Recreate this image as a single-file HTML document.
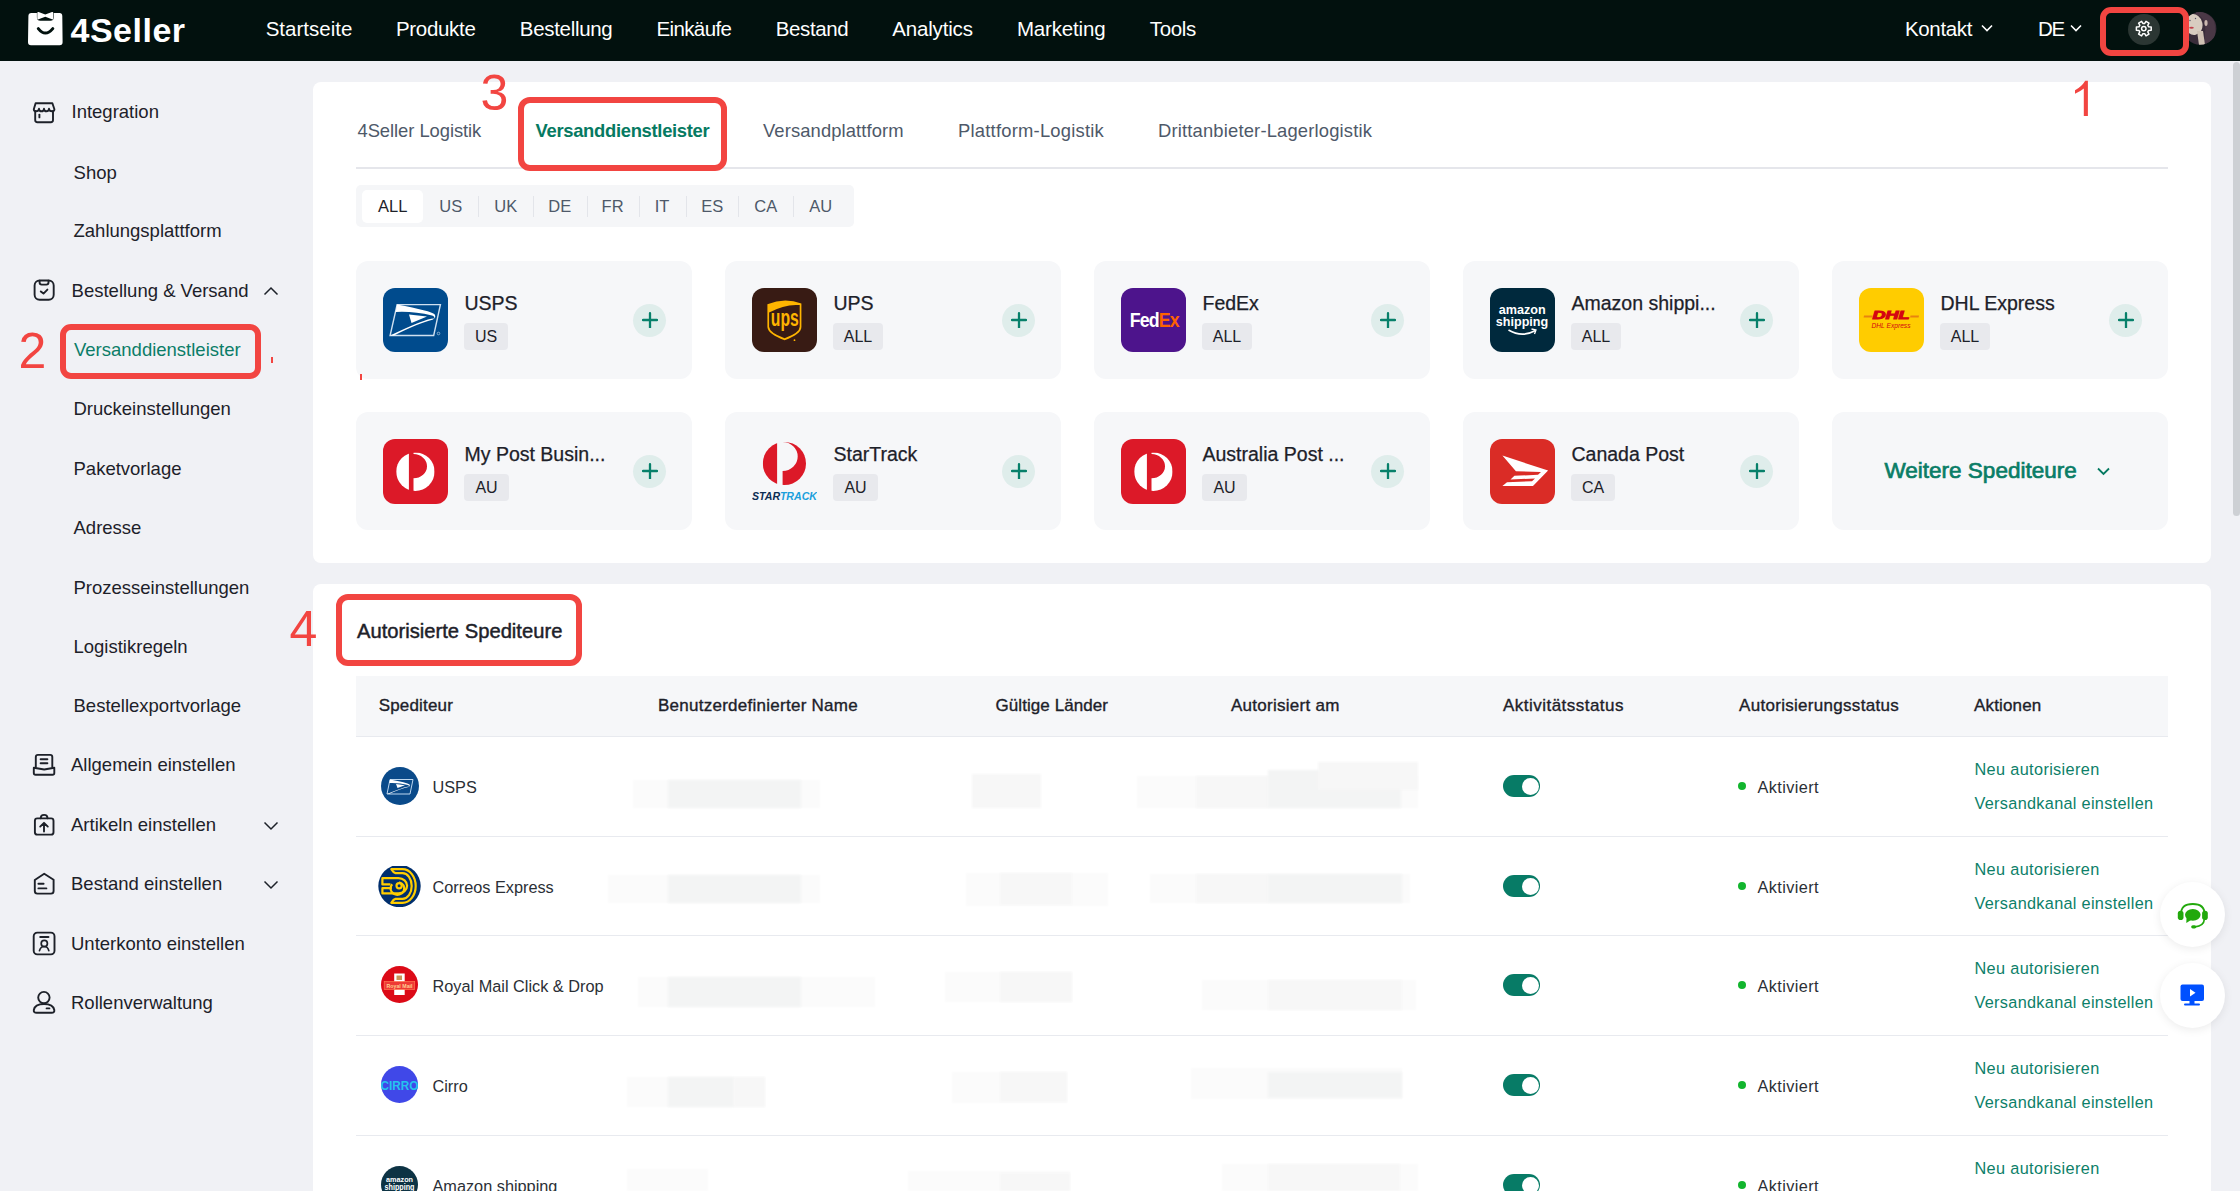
<!DOCTYPE html>
<html><head><meta charset="utf-8"><title>4Seller</title>
<style>
html,body{margin:0;padding:0;width:2240px;height:1191px;overflow:hidden;background:#f0f1f5;}
body{position:relative;font-family:'Liberation Sans', sans-serif;}
.t{position:absolute;white-space:nowrap;font-family:'Liberation Sans', sans-serif;}
.b{position:absolute;box-sizing:border-box;}
</style></head><body>
<div class="b" style="left:0px;top:0px;width:2240px;height:1191px;background:#f0f1f5;border-radius:0px;"></div>
<div class="b" style="left:0px;top:0px;width:2240px;height:61px;background:#02110e;border-radius:0px;"></div>
<svg class="b" style="left:26px;top:10px;" width="40" height="38" viewBox="0 0 40 38">
<path d="M2.4 6 Q2.4 3 5.4 3 L10.9 3 L10.9 7.2 Q10.9 10.7 14.4 10.7 L24.3 10.7 Q27.8 10.7 27.8 7.2 L27.8 3 L33.4 3 Q36.3 3 36.3 6 L36.6 32.2 Q36.6 35.2 33.6 35.2 L5 35.2 Q2 35.2 2 32.2 Z" fill="#fff"/>
<path d="M11.3 3 Q11.3 1.6 12.6 2 L19.3 4.6 L26 2 Q27.3 1.6 27.3 3 L27.3 8.4 Q27.3 9.8 26 9.3 L19.3 6.8 L12.6 9.3 Q11.3 9.8 11.3 8.4 Z" fill="#fff"/>
<path d="M12.3 18.6 Q19.3 27.5 26.8 18.6" stroke="#02110e" stroke-width="3" fill="none" stroke-linecap="round"/>
</svg>
<div class="t" style="left:70.50px;top:12.86px;font-size:34px;line-height:34px;color:#fff;font-weight:700;letter-spacing:0.5px;">4Seller</div>
<div class="t" style="left:265.70px;top:18.52px;font-size:20.5px;line-height:20.5px;color:#fff;letter-spacing:0px;">Startseite</div>
<div class="t" style="left:395.90px;top:18.52px;font-size:20.5px;line-height:20.5px;color:#fff;letter-spacing:-0.3px;">Produkte</div>
<div class="t" style="left:519.80px;top:18.52px;font-size:20.5px;line-height:20.5px;color:#fff;letter-spacing:-0.31px;">Bestellung</div>
<div class="t" style="left:656.40px;top:18.52px;font-size:20.5px;line-height:20.5px;color:#fff;letter-spacing:-0.6px;">Einkäufe</div>
<div class="t" style="left:775.80px;top:18.52px;font-size:20.5px;line-height:20.5px;color:#fff;letter-spacing:-0.38px;">Bestand</div>
<div class="t" style="left:892.30px;top:18.52px;font-size:20.5px;line-height:20.5px;color:#fff;letter-spacing:-0.18px;">Analytics</div>
<div class="t" style="left:1016.90px;top:18.52px;font-size:20.5px;line-height:20.5px;color:#fff;letter-spacing:-0.16px;">Marketing</div>
<div class="t" style="left:1149.70px;top:18.52px;font-size:20.5px;line-height:20.5px;color:#fff;letter-spacing:-0.3px;">Tools</div>
<div class="t" style="left:1905.00px;top:18.52px;font-size:20.5px;line-height:20.5px;color:#fff;letter-spacing:-0.36px;">Kontakt</div>
<div class="t" style="left:2038.00px;top:18.52px;font-size:20.5px;line-height:20.5px;color:#fff;letter-spacing:-1.2px;">DE</div>
<svg class="b" style="left:1981px;top:24px;" width="12" height="8" viewBox="0 0 12 8"><path d="M1 1.5 L6 6.5 L11 1.5" stroke="#fff" stroke-width="1.6" fill="none"/></svg>
<svg class="b" style="left:2070px;top:24px;" width="12" height="8" viewBox="0 0 12 8"><path d="M1 1.5 L6 6.5 L11 1.5" stroke="#fff" stroke-width="1.6" fill="none"/></svg>
<div class="b" style="left:2128px;top:13.5px;width:32px;height:31.5px;background:#2b3633;border-radius:16px;"></div>
<svg class="b" style="left:2133px;top:18px;" width="22" height="22" viewBox="0 0 22 22"><g transform="translate(10.8 10.6)" fill="none" stroke="#fff" stroke-width="1.5" stroke-linejoin="round">
<path d="M4.89 -1.78 L7.41 -1.71 L7.41 1.71 L4.89 1.78 L3.98 3.34 L5.18 5.56 L2.22 7.27 L0.90 5.12 L-0.90 5.12 L-2.22 7.27 L-5.18 5.56 L-3.98 3.34 L-4.89 1.78 L-7.41 1.71 L-7.41 -1.71 L-4.89 -1.78 L-3.98 -3.34 L-5.18 -5.56 L-2.22 -7.27 L-0.90 -5.12 L0.90 -5.12 L2.22 -7.27 L5.18 -5.56 L3.98 -3.34 Z"/>
<circle r="2.2"/></g></svg>
<svg class="b" style="left:2183px;top:11px;" width="34" height="34" viewBox="0 0 34 34"><defs><clipPath id="av"><circle cx="17" cy="17.4" r="16.4"/></clipPath></defs>
<g clip-path="url(#av)"><rect width="34" height="34" fill="#3a2d3a"/>
<path d="M13 0 Q26 1 31 10 Q34 20 30 34 L20 34 Q24 20 21 10 Q18 4 13 4 Z" fill="#4a3846"/>
<ellipse cx="10.5" cy="13.5" rx="9" ry="10.5" transform="rotate(-12 10.5 13.5)" fill="#d8ccc0"/>
<path d="M14 20 L20 20 L22 34 L16 34 Z" fill="#d0c2b4"/>
<ellipse cx="8.5" cy="16.8" rx="2.3" ry="1" fill="#c0404a"/>
<circle cx="12.5" cy="7.5" r="0.7" fill="#556"/><circle cx="7" cy="9.5" r="0.7" fill="#556"/>
<ellipse cx="23" cy="12" rx="1.6" ry="3" fill="#cbb8b0"/></g></svg>
<div class="b" style="left:2100px;top:7px;width:88.6px;height:48.5px;border:6.5px solid #f24541;border-radius:11px;"></div>
<div class="b" style="left:2233px;top:62px;width:7px;height:454px;background:#cdd0d4;border-radius:4px;"></div>
<svg class="b" style="left:28px;top:96px;" width="32" height="32" viewBox="0 0 32 32"><g fill="none" stroke="#1d2129" stroke-width="1.9" stroke-linecap="round" stroke-linejoin="round"><path d="M7.6 7.3 L24.4 7.3 L26.4 13.2 Q26.4 15.2 24.2 15.2 Q21.2 15.2 21 12.8 Q20.6 15.3 18.5 15.3 Q16.2 15.3 16 12.8 Q15.7 15.3 13.5 15.3 Q11.2 15.3 11 12.8 Q10.6 15.2 8 15.2 Q5.8 15.2 5.8 13.2 Z"/>
<path d="M7.2 15.2 L7.2 24 Q7.2 26.2 9.4 26.2 L22.8 26.2 Q25 26.2 25 24 L25 15.2"/><path d="M11.4 18.6 L11.4 21.4"/></g></svg>
<svg class="b" style="left:28px;top:274px;" width="32" height="32" viewBox="0 0 32 32"><g fill="none" stroke="#1d2129" stroke-width="1.9" stroke-linecap="round" stroke-linejoin="round"><rect x="6.6" y="6.5" width="19.1" height="19.3" rx="5"/><path d="M11.6 6.6 L11.6 8.5 Q11.6 10.6 13.7 10.6 L18.4 10.6 Q20.5 10.6 20.5 8.5 L20.5 6.6"/><path d="M12.8 17.4 L15.5 19.6 L19.4 15.6"/></g></svg>
<svg class="b" style="left:28px;top:748px;" width="32" height="32" viewBox="0 0 32 32"><g fill="none" stroke="#1d2129" stroke-width="1.9" stroke-linecap="round" stroke-linejoin="round"><path d="M7.8 19 L7.8 9 Q7.8 6.9 9.9 6.9 L22.2 6.9 Q24.3 6.9 24.3 9 L24.3 19"/><path d="M12.6 11.3 L19.4 11.3 M12.6 15.2 L19.4 15.2"/>
<path d="M5.8 19.7 L16.2 21.5 L26.3 19.7 L26.3 25 Q26.3 26.8 24.5 26.8 L7.6 26.8 Q5.8 26.8 5.8 25 Z"/></g></svg>
<svg class="b" style="left:28px;top:808px;" width="32" height="32" viewBox="0 0 32 32"><g fill="none" stroke="#1d2129" stroke-width="1.9" stroke-linecap="round" stroke-linejoin="round"><rect x="6.9" y="10.4" width="18.6" height="16.2" rx="2.4"/><path d="M12.7 10.3 Q12.7 6.9 16.1 6.9 Q19.5 6.9 19.5 10.3"/><path d="M16 23.5 L16 15.2 M12.2 18.6 L16 14.8 L19.8 18.6"/></g></svg>
<svg class="b" style="left:28px;top:866px;" width="32" height="32" viewBox="0 0 32 32"><g fill="none" stroke="#1d2129" stroke-width="1.9" stroke-linecap="round" stroke-linejoin="round"><path d="M6.8 14 L16.2 7.8 L25.6 13.8 L25.6 25 Q25.6 27.6 23 27.6 L9.4 27.6 Q6.8 27.6 6.8 25 Z"/><path d="M10.4 17.7 L15.6 17.7 M10.4 22.4 L18.4 22.4"/></g></svg>
<svg class="b" style="left:28px;top:926px;" width="32" height="32" viewBox="0 0 32 32"><g fill="none" stroke="#1d2129" stroke-width="1.9" stroke-linecap="round" stroke-linejoin="round"><rect x="5.7" y="6.6" width="20.8" height="21.8" rx="3.6"/><path d="M12.2 11 L20.5 11"/><circle cx="16.3" cy="17.5" r="3.1" stroke-width="1.7"/><path d="M11.5 24.6 Q12.6 20.5 16.2 20.5 Q19.8 20.5 20.8 24.6" stroke-width="1.7"/></g></svg>
<svg class="b" style="left:28px;top:985px;" width="32" height="32" viewBox="0 0 32 32"><g fill="none" stroke="#1d2129" stroke-width="1.9" stroke-linecap="round" stroke-linejoin="round"><circle cx="15.9" cy="12.6" r="5.7"/><path d="M5.8 25 Q6.8 19 16 19 Q25.2 19 26.3 25 Q26.6 27.8 23.6 27.8 L8.6 27.8 Q5.5 27.8 5.8 25 Z"/><path d="M18.6 23.4 L21.4 23.4"/></g></svg>
<div class="t" style="left:71.50px;top:103.34px;font-size:18.5px;line-height:18.5px;color:#1d2129;">Integration</div>
<div class="t" style="left:73.60px;top:163.54px;font-size:18.5px;line-height:18.5px;color:#1d2129;">Shop</div>
<div class="t" style="left:73.50px;top:222.44px;font-size:18.5px;line-height:18.5px;color:#1d2129;">Zahlungsplattform</div>
<div class="t" style="left:71.60px;top:282.24px;font-size:18.5px;line-height:18.5px;color:#1d2129;">Bestellung &amp; Versand</div>
<div class="t" style="left:74.00px;top:341.24px;font-size:18.5px;line-height:18.5px;color:#0b7d68;">Versanddienstleister</div>
<div class="t" style="left:73.50px;top:400.44px;font-size:18.5px;line-height:18.5px;color:#1d2129;">Druckeinstellungen</div>
<div class="t" style="left:73.50px;top:459.84px;font-size:18.5px;line-height:18.5px;color:#1d2129;">Paketvorlage</div>
<div class="t" style="left:73.50px;top:519.24px;font-size:18.5px;line-height:18.5px;color:#1d2129;">Adresse</div>
<div class="t" style="left:73.50px;top:578.64px;font-size:18.5px;line-height:18.5px;color:#1d2129;">Prozesseinstellungen</div>
<div class="t" style="left:73.50px;top:638.04px;font-size:18.5px;line-height:18.5px;color:#1d2129;">Logistikregeln</div>
<div class="t" style="left:73.50px;top:697.44px;font-size:18.5px;line-height:18.5px;color:#1d2129;">Bestellexportvorlage</div>
<div class="t" style="left:71.00px;top:756.24px;font-size:18.5px;line-height:18.5px;color:#1d2129;">Allgemein einstellen</div>
<div class="t" style="left:71.00px;top:815.74px;font-size:18.5px;line-height:18.5px;color:#1d2129;">Artikeln einstellen</div>
<div class="t" style="left:71.00px;top:875.24px;font-size:18.5px;line-height:18.5px;color:#1d2129;">Bestand einstellen</div>
<div class="t" style="left:71.00px;top:934.74px;font-size:18.5px;line-height:18.5px;color:#1d2129;">Unterkonto einstellen</div>
<div class="t" style="left:71.00px;top:994.24px;font-size:18.5px;line-height:18.5px;color:#1d2129;">Rollenverwaltung</div>
<svg class="b" style="left:263px;top:286px;" width="16" height="10" viewBox="0 0 16 10"><path d="M1.5 8.5 L8 2 L14.5 8.5" stroke="#1d2129" stroke-width="1.5" fill="none"/></svg>
<svg class="b" style="left:263px;top:821px;" width="16" height="10" viewBox="0 0 16 10"><path d="M1.5 1.5 L8 8 L14.5 1.5" stroke="#1d2129" stroke-width="1.5" fill="none"/></svg>
<svg class="b" style="left:263px;top:880px;" width="16" height="10" viewBox="0 0 16 10"><path d="M1.5 1.5 L8 8 L14.5 1.5" stroke="#1d2129" stroke-width="1.5" fill="none"/></svg>
<div class="b" style="left:60px;top:324px;width:201px;height:55px;border:6.3px solid #f24541;border-radius:11px;"></div>
<div class="t" style="left:18.50px;top:326.00px;font-size:50px;line-height:50px;color:#f24541;">2</div>
<div class="b" style="left:271px;top:357px;width:2px;height:6px;background:#f24541;border-radius:0px;"></div>
<div class="b" style="left:313px;top:82px;width:1898px;height:481px;background:#fff;border-radius:8px;"></div>
<div class="t" style="left:357.50px;top:122.46px;font-size:18.4px;line-height:18.4px;color:#4e5969;letter-spacing:-0.06px;">4Seller Logistik</div>
<div class="t" style="left:535.50px;top:122.46px;font-size:18.4px;line-height:18.4px;color:#067a62;font-weight:700;letter-spacing:-0.3px;">Versanddienstleister</div>
<div class="t" style="left:763.00px;top:122.46px;font-size:18.4px;line-height:18.4px;color:#4e5969;letter-spacing:0.11px;">Versandplattform</div>
<div class="t" style="left:958.00px;top:122.46px;font-size:18.4px;line-height:18.4px;color:#4e5969;letter-spacing:0.22px;">Plattform-Logistik</div>
<div class="t" style="left:1158.00px;top:122.46px;font-size:18.4px;line-height:18.4px;color:#4e5969;letter-spacing:0.17px;">Drittanbieter-Lagerlogistik</div>
<div class="b" style="left:356px;top:167px;width:1812px;height:2px;background:#e5e6eb;border-radius:0px;"></div>
<div class="b" style="left:518px;top:97px;width:209px;height:74px;border:6.3px solid #f24541;border-radius:12px;"></div>
<div class="t" style="left:480.50px;top:67.80px;font-size:50px;line-height:50px;color:#f24541;">3</div>
<svg class="b" style="left:2070px;top:78px;" width="22" height="40" viewBox="0 0 22 40"><path d="M13.8 2.8 L17.9 2.8 L17.9 37.9 L13.8 37.9 L13.8 10.6 Q10 13.8 5 15.8 L5 12.3 Q11.5 9 15.2 2.8 Z" fill="#f24541"/></svg>
<div class="b" style="left:356px;top:185px;width:498px;height:42px;background:#f5f6f8;border-radius:5px;"></div>
<div class="b" style="left:362px;top:190px;width:61px;height:33px;background:#fff;border-radius:5px;"></div>
<div class="t" style="left:362.7px;width:60px;text-align:center;top:197.86px;font-size:16.5px;line-height:16.5px;color:#1d2129">ALL</div>
<div class="t" style="left:420.7px;width:60px;text-align:center;top:197.86px;font-size:16.5px;line-height:16.5px;color:#4e5969">US</div>
<div class="t" style="left:475.7px;width:60px;text-align:center;top:197.86px;font-size:16.5px;line-height:16.5px;color:#4e5969">UK</div>
<div class="t" style="left:529.8px;width:60px;text-align:center;top:197.86px;font-size:16.5px;line-height:16.5px;color:#4e5969">DE</div>
<div class="t" style="left:582.6px;width:60px;text-align:center;top:197.86px;font-size:16.5px;line-height:16.5px;color:#4e5969">FR</div>
<div class="t" style="left:632px;width:60px;text-align:center;top:197.86px;font-size:16.5px;line-height:16.5px;color:#4e5969">IT</div>
<div class="t" style="left:682.3px;width:60px;text-align:center;top:197.86px;font-size:16.5px;line-height:16.5px;color:#4e5969">ES</div>
<div class="t" style="left:735.8px;width:60px;text-align:center;top:197.86px;font-size:16.5px;line-height:16.5px;color:#4e5969">CA</div>
<div class="t" style="left:790.8px;width:60px;text-align:center;top:197.86px;font-size:16.5px;line-height:16.5px;color:#4e5969">AU</div>
<div class="b" style="left:478px;top:196px;width:1px;height:21px;background:#e3e5ea;border-radius:0px;"></div>
<div class="b" style="left:533px;top:196px;width:1px;height:21px;background:#e3e5ea;border-radius:0px;"></div>
<div class="b" style="left:587px;top:196px;width:1px;height:21px;background:#e3e5ea;border-radius:0px;"></div>
<div class="b" style="left:639px;top:196px;width:1px;height:21px;background:#e3e5ea;border-radius:0px;"></div>
<div class="b" style="left:686px;top:196px;width:1px;height:21px;background:#e3e5ea;border-radius:0px;"></div>
<div class="b" style="left:738px;top:196px;width:1px;height:21px;background:#e3e5ea;border-radius:0px;"></div>
<div class="b" style="left:793px;top:196px;width:1px;height:21px;background:#e3e5ea;border-radius:0px;"></div>
<div class="b" style="left:356px;top:261px;width:336px;height:118px;background:#f6f7f9;border-radius:12px;"></div>
<svg class="b" style="left:383px;top:288px;" width="65" height="65" viewBox="0 0 65 65"><rect width="65" height="64" rx="12" fill="#004b8d"/>
<path d="M14.1 16.6 L57.4 16.6 L50.7 47.5 L7.1 47.5 Z" fill="none" stroke="#cfe0f0" stroke-width="1.4"/>
<path d="M14.1 16.6 L12.6 24 Q30 23 49 27.5 Q52 28.5 51.2 30.5 Q44 29.8 7.1 47.5 L11 47.5 Q36 35 49.5 31.8 Q53.5 30 51.8 26.5 Q48 23 14.1 16.6 Z" fill="#fff"/>
<path d="M26 26.5 L44 28.5 L28.5 35 Z" fill="#fff"/>
<circle cx="55.5" cy="45.5" r="1.3" fill="none" stroke="#cfe0f0" stroke-width="0.6"/></svg>
<div class="t" style="left:464.50px;top:294.08px;font-size:19.5px;line-height:19.5px;color:#1d2129;-webkit-text-stroke:0.25px #1d2129;">USPS</div>
<div class="b" style="left:464px;top:323px;width:44px;height:27px;background:#e8e9ed;border-radius:4px;"></div>
<div class="t" style="left:464px;width:44px;text-align:center;top:329.04px;font-size:16px;line-height:16px;color:#1d2129">US</div>
<div class="b" style="left:632.5px;top:303.5px;width:33px;height:33px;background:#dfedeb;border-radius:16.5px;"></div>
<svg class="b" style="left:642px;top:312px;" width="16" height="16" viewBox="0 0 16 16"><path d="M8 1.2 L8 15.8 M1 8 L15 8" stroke="#07806a" stroke-width="2.3" stroke-linecap="round"/></svg>
<div class="b" style="left:725px;top:261px;width:336px;height:118px;background:#f6f7f9;border-radius:12px;"></div>
<svg class="b" style="left:752px;top:288px;" width="65" height="65" viewBox="0 0 65 65"><rect width="65" height="64" rx="12" fill="#381b14"/>
<path d="M15.4 16.3 Q32.6 9.3 49.4 15.6 L49.4 39 Q49.4 46 32.6 52.2 Q15.8 46 15.4 39 Z" fill="#ffb500"/>
<path d="M17.1 24.6 Q33 15.8 47.7 17.1 L47.7 38.8 Q47.7 44.8 32.6 50.3 Q17.5 44.8 17.1 38.8 Z" fill="#381b14"/>
<text x="32.8" y="38.4" text-anchor="middle" font-family="Liberation Sans" font-weight="700" font-size="23" fill="#ffb500" textLength="28" lengthAdjust="spacingAndGlyphs">ups</text>
<circle cx="42.5" cy="52.2" r="0.9" fill="#ffb500"/></svg>
<div class="t" style="left:833.50px;top:294.08px;font-size:19.5px;line-height:19.5px;color:#1d2129;-webkit-text-stroke:0.25px #1d2129;">UPS</div>
<div class="b" style="left:833px;top:323px;width:50px;height:27px;background:#e8e9ed;border-radius:4px;"></div>
<div class="t" style="left:833px;width:50px;text-align:center;top:329.04px;font-size:16px;line-height:16px;color:#1d2129">ALL</div>
<div class="b" style="left:1001.5px;top:303.5px;width:33px;height:33px;background:#dfedeb;border-radius:16.5px;"></div>
<svg class="b" style="left:1011px;top:312px;" width="16" height="16" viewBox="0 0 16 16"><path d="M8 1.2 L8 15.8 M1 8 L15 8" stroke="#07806a" stroke-width="2.3" stroke-linecap="round"/></svg>
<div class="b" style="left:1094px;top:261px;width:336px;height:118px;background:#f6f7f9;border-radius:12px;"></div>
<svg class="b" style="left:1121px;top:288px;" width="65" height="65" viewBox="0 0 65 65"><rect width="65" height="64" rx="12" fill="#4d148c"/>
<text x="8.7" y="39.3" font-family="Liberation Sans" font-weight="700" font-size="20.5" textLength="49" lengthAdjust="spacingAndGlyphs" letter-spacing="-1"><tspan fill="#fff">Fed</tspan><tspan fill="#ff6200">Ex</tspan></text></svg>
<div class="t" style="left:1202.50px;top:294.08px;font-size:19.5px;line-height:19.5px;color:#1d2129;-webkit-text-stroke:0.25px #1d2129;">FedEx</div>
<div class="b" style="left:1202px;top:323px;width:50px;height:27px;background:#e8e9ed;border-radius:4px;"></div>
<div class="t" style="left:1202px;width:50px;text-align:center;top:329.04px;font-size:16px;line-height:16px;color:#1d2129">ALL</div>
<div class="b" style="left:1370.5px;top:303.5px;width:33px;height:33px;background:#dfedeb;border-radius:16.5px;"></div>
<svg class="b" style="left:1380px;top:312px;" width="16" height="16" viewBox="0 0 16 16"><path d="M8 1.2 L8 15.8 M1 8 L15 8" stroke="#07806a" stroke-width="2.3" stroke-linecap="round"/></svg>
<div class="b" style="left:1463px;top:261px;width:336px;height:118px;background:#f6f7f9;border-radius:12px;"></div>
<svg class="b" style="left:1490px;top:288px;" width="65" height="65" viewBox="0 0 65 65"><rect width="65" height="64" rx="12" fill="#00293d"/>
<text x="32.3" y="25.6" text-anchor="middle" font-family="Liberation Sans" font-weight="700" font-size="12.5" fill="#fff" textLength="47" lengthAdjust="spacingAndGlyphs">amazon</text>
<text x="32" y="38.4" text-anchor="middle" font-family="Liberation Sans" font-weight="700" font-size="13.5" fill="#fff" textLength="52.5" lengthAdjust="spacingAndGlyphs">shipping</text>
<path d="M18.5 42 Q32 50 45.5 42.5" stroke="#fff" stroke-width="1.7" fill="none"/><path d="M41.5 41 L46 42 L44.5 46" stroke="#fff" stroke-width="1.3" fill="none"/></svg>
<div class="t" style="left:1571.50px;top:294.08px;font-size:19.5px;line-height:19.5px;color:#1d2129;-webkit-text-stroke:0.25px #1d2129;">Amazon shippi...</div>
<div class="b" style="left:1571px;top:323px;width:50px;height:27px;background:#e8e9ed;border-radius:4px;"></div>
<div class="t" style="left:1571px;width:50px;text-align:center;top:329.04px;font-size:16px;line-height:16px;color:#1d2129">ALL</div>
<div class="b" style="left:1739.5px;top:303.5px;width:33px;height:33px;background:#dfedeb;border-radius:16.5px;"></div>
<svg class="b" style="left:1749px;top:312px;" width="16" height="16" viewBox="0 0 16 16"><path d="M8 1.2 L8 15.8 M1 8 L15 8" stroke="#07806a" stroke-width="2.3" stroke-linecap="round"/></svg>
<div class="b" style="left:1832px;top:261px;width:336px;height:118px;background:#f6f7f9;border-radius:12px;"></div>
<svg class="b" style="left:1859px;top:288px;" width="65" height="65" viewBox="0 0 65 65"><rect width="65" height="64" rx="12" fill="#ffcc00"/>
<path d="M5 27.6 L13.5 27.6 L13.1 29.6 L4.6 29.6 Z M51.5 27.6 L60 27.6 L59.6 29.6 L51.1 29.6 Z" fill="#e8830f"/>
<text x="32" y="30.5" text-anchor="middle" font-family="Liberation Sans" font-weight="700" font-style="italic" font-size="10.5" fill="#d40511" stroke="#d40511" stroke-width="0.9" textLength="37" lengthAdjust="spacingAndGlyphs">DHL</text>
<text x="32" y="39.8" text-anchor="middle" font-family="Liberation Sans" font-style="italic" font-size="7.2" fill="#d40511" textLength="39" lengthAdjust="spacingAndGlyphs">DHL Express</text></svg>
<div class="t" style="left:1940.50px;top:294.08px;font-size:19.5px;line-height:19.5px;color:#1d2129;-webkit-text-stroke:0.25px #1d2129;">DHL Express</div>
<div class="b" style="left:1940px;top:323px;width:50px;height:27px;background:#e8e9ed;border-radius:4px;"></div>
<div class="t" style="left:1940px;width:50px;text-align:center;top:329.04px;font-size:16px;line-height:16px;color:#1d2129">ALL</div>
<div class="b" style="left:2108.5px;top:303.5px;width:33px;height:33px;background:#dfedeb;border-radius:16.5px;"></div>
<svg class="b" style="left:2118px;top:312px;" width="16" height="16" viewBox="0 0 16 16"><path d="M8 1.2 L8 15.8 M1 8 L15 8" stroke="#07806a" stroke-width="2.3" stroke-linecap="round"/></svg>
<div class="b" style="left:356px;top:412px;width:336px;height:118px;background:#f6f7f9;border-radius:12px;"></div>
<svg class="b" style="left:383px;top:439px;" width="65" height="65" viewBox="0 0 65 65"><rect width="65" height="65" rx="12" fill="#dc1928"/><clipPath id="apc1"><circle cx="32.4" cy="32.7" r="19.2"/></clipPath>
<g clip-path="url(#apc1)" fill="#fff">
<rect x="13.2" y="13.500000000000004" width="12.7" height="38.4"/>
<path fill-rule="evenodd" d="M30.5 13.500000000000004 L51.599999999999994 13.500000000000004 L51.599999999999994 51.900000000000006 L30.5 51.900000000000006 Z M30.5 15.1 A13.5 12.1 0 0 1 30.5 39.3 Z"/>
</g></svg>
<div class="t" style="left:464.50px;top:445.08px;font-size:19.5px;line-height:19.5px;color:#1d2129;-webkit-text-stroke:0.25px #1d2129;">My Post Busin...</div>
<div class="b" style="left:464px;top:474px;width:45px;height:27px;background:#e8e9ed;border-radius:4px;"></div>
<div class="t" style="left:464px;width:45px;text-align:center;top:480.04px;font-size:16px;line-height:16px;color:#1d2129">AU</div>
<div class="b" style="left:632.5px;top:454.5px;width:33px;height:33px;background:#dfedeb;border-radius:16.5px;"></div>
<svg class="b" style="left:642px;top:463px;" width="16" height="16" viewBox="0 0 16 16"><path d="M8 1.2 L8 15.8 M1 8 L15 8" stroke="#07806a" stroke-width="2.3" stroke-linecap="round"/></svg>
<div class="b" style="left:725px;top:412px;width:336px;height:118px;background:#f6f7f9;border-radius:12px;"></div>
<svg class="b" style="left:752px;top:439px;" width="65" height="65" viewBox="0 0 65 65"><clipPath id="apc2"><circle cx="32.4" cy="24.5" r="21.6"/></clipPath>
<g clip-path="url(#apc2)" fill="#dc1928">
<rect x="10.799999999999997" y="2.8999999999999986" width="14.300000000000004" height="43.2"/>
<path fill-rule="evenodd" d="M30.6 2.8999999999999986 L54.0 2.8999999999999986 L54.0 46.1 L30.6 46.1 Z M30.6 3.0 A15.1 14.45 0 0 1 30.6 31.9 Z"/>
</g>
<text x="0" y="60.5" font-family="Liberation Sans" font-weight="700" font-style="italic" font-size="10" textLength="65" lengthAdjust="spacingAndGlyphs"><tspan fill="#0c2d52">STAR</tspan><tspan fill="#1ba0dc">TRACK</tspan></text></svg>
<div class="t" style="left:833.50px;top:445.08px;font-size:19.5px;line-height:19.5px;color:#1d2129;-webkit-text-stroke:0.25px #1d2129;">StarTrack</div>
<div class="b" style="left:833px;top:474px;width:45px;height:27px;background:#e8e9ed;border-radius:4px;"></div>
<div class="t" style="left:833px;width:45px;text-align:center;top:480.04px;font-size:16px;line-height:16px;color:#1d2129">AU</div>
<div class="b" style="left:1001.5px;top:454.5px;width:33px;height:33px;background:#dfedeb;border-radius:16.5px;"></div>
<svg class="b" style="left:1011px;top:463px;" width="16" height="16" viewBox="0 0 16 16"><path d="M8 1.2 L8 15.8 M1 8 L15 8" stroke="#07806a" stroke-width="2.3" stroke-linecap="round"/></svg>
<div class="b" style="left:1094px;top:412px;width:336px;height:118px;background:#f6f7f9;border-radius:12px;"></div>
<svg class="b" style="left:1121px;top:439px;" width="65" height="65" viewBox="0 0 65 65"><rect width="65" height="65" rx="12" fill="#dc1928"/><clipPath id="apc3"><circle cx="32.4" cy="32.7" r="19.2"/></clipPath>
<g clip-path="url(#apc3)" fill="#fff">
<rect x="13.2" y="13.500000000000004" width="12.7" height="38.4"/>
<path fill-rule="evenodd" d="M30.5 13.500000000000004 L51.599999999999994 13.500000000000004 L51.599999999999994 51.900000000000006 L30.5 51.900000000000006 Z M30.5 15.1 A13.5 12.1 0 0 1 30.5 39.3 Z"/>
</g></svg>
<div class="t" style="left:1202.50px;top:445.08px;font-size:19.5px;line-height:19.5px;color:#1d2129;-webkit-text-stroke:0.25px #1d2129;">Australia Post ...</div>
<div class="b" style="left:1202px;top:474px;width:45px;height:27px;background:#e8e9ed;border-radius:4px;"></div>
<div class="t" style="left:1202px;width:45px;text-align:center;top:480.04px;font-size:16px;line-height:16px;color:#1d2129">AU</div>
<div class="b" style="left:1370.5px;top:454.5px;width:33px;height:33px;background:#dfedeb;border-radius:16.5px;"></div>
<svg class="b" style="left:1380px;top:463px;" width="16" height="16" viewBox="0 0 16 16"><path d="M8 1.2 L8 15.8 M1 8 L15 8" stroke="#07806a" stroke-width="2.3" stroke-linecap="round"/></svg>
<div class="b" style="left:1463px;top:412px;width:336px;height:118px;background:#f6f7f9;border-radius:12px;"></div>
<svg class="b" style="left:1490px;top:439px;" width="65" height="65" viewBox="0 0 65 65"><rect width="65" height="65" rx="12" fill="#da2c26"/>
<path d="M12.4 16.5 L58.1 31.6 L43 47 L12.4 47 L17 43.2 L42 42.2 L45 39.5 L20.5 40.5 L24.4 36.8 L48 35.8 L51 33 L25.9 32.2 Z" fill="#fff"/></svg>
<div class="t" style="left:1571.50px;top:445.08px;font-size:19.5px;line-height:19.5px;color:#1d2129;-webkit-text-stroke:0.25px #1d2129;">Canada Post</div>
<div class="b" style="left:1571px;top:474px;width:44px;height:27px;background:#e8e9ed;border-radius:4px;"></div>
<div class="t" style="left:1571px;width:44px;text-align:center;top:480.04px;font-size:16px;line-height:16px;color:#1d2129">CA</div>
<div class="b" style="left:1739.5px;top:454.5px;width:33px;height:33px;background:#dfedeb;border-radius:16.5px;"></div>
<svg class="b" style="left:1749px;top:463px;" width="16" height="16" viewBox="0 0 16 16"><path d="M8 1.2 L8 15.8 M1 8 L15 8" stroke="#07806a" stroke-width="2.3" stroke-linecap="round"/></svg>
<div class="b" style="left:1832px;top:412px;width:336px;height:118px;background:#f6f7f9;border-radius:12px;"></div>
<div class="t" style="left:1884.50px;top:460.20px;font-size:22.5px;line-height:22.5px;color:#0a7d66;-webkit-text-stroke:0.7px #0a7d66;">Weitere Spediteure</div>
<svg class="b" style="left:2096px;top:466px;" width="16" height="12" viewBox="0 0 16 12"><path d="M2 2.5 L7.5 8 L13 2.5" stroke="#067a62" stroke-width="1.8" fill="none"/></svg>
<div class="b" style="left:360px;top:374px;width:2px;height:6px;background:#f24541;border-radius:0px;"></div>
<div class="b" style="left:313px;top:584px;width:1898px;height:700px;background:#fff;border-radius:8px;"></div>
<div class="b" style="left:336px;top:594px;width:246px;height:72px;border:6.3px solid #f24541;border-radius:12px;"></div>
<div class="t" style="left:289.50px;top:604.40px;font-size:50px;line-height:50px;color:#f24541;">4</div>
<div class="t" style="left:357.00px;top:620.97px;font-size:20.2px;line-height:20.2px;color:#1d2129;-webkit-text-stroke:0.45px #1d2129;">Autorisierte Spediteure</div>
<div class="b" style="left:356px;top:676px;width:1812px;height:60px;background:#f6f7f9;border-radius:0px;"></div>
<div class="b" style="left:356px;top:736px;width:1812px;height:1px;background:#e8eaef;border-radius:0px;"></div>
<div class="t" style="left:378.70px;top:696.98px;font-size:17px;line-height:17px;color:#1d2129;letter-spacing:0.17px;-webkit-text-stroke:0.35px #1d2129;">Spediteur</div>
<div class="t" style="left:658.00px;top:696.98px;font-size:17px;line-height:17px;color:#1d2129;letter-spacing:0.26px;-webkit-text-stroke:0.35px #1d2129;">Benutzerdefinierter Name</div>
<div class="t" style="left:995.50px;top:696.98px;font-size:17px;line-height:17px;color:#1d2129;letter-spacing:0.07px;-webkit-text-stroke:0.35px #1d2129;">Gültige Länder</div>
<div class="t" style="left:1231.00px;top:696.98px;font-size:17px;line-height:17px;color:#1d2129;letter-spacing:0.27px;-webkit-text-stroke:0.35px #1d2129;">Autorisiert am</div>
<div class="t" style="left:1503.00px;top:696.98px;font-size:17px;line-height:17px;color:#1d2129;letter-spacing:0.47px;-webkit-text-stroke:0.35px #1d2129;">Aktivitätsstatus</div>
<div class="t" style="left:1739.00px;top:696.98px;font-size:17px;line-height:17px;color:#1d2129;letter-spacing:0.3px;-webkit-text-stroke:0.35px #1d2129;">Autorisierungsstatus</div>
<div class="t" style="left:1974.00px;top:696.98px;font-size:17px;line-height:17px;color:#1d2129;letter-spacing:0.16px;-webkit-text-stroke:0.35px #1d2129;">Aktionen</div>
<svg class="b" style="left:381px;top:767px;" width="38" height="38" viewBox="0 0 38 38"><circle cx="19" cy="19" r="19" fill="#0a4a8a"/><path d="M9 12.5 L32 12.5 L29 27 L6 27 Z" fill="none" stroke="#bcd6ef" stroke-width="1"/>
<path d="M9 12.5 L8.3 16 Q18 15.5 27 18 Q28.5 18.5 28 19.5 Q24 19.5 6 27 L8 27 Q20 21.5 27.5 20 Q29.5 19 28.6 17.5 Q26 15.5 9 12.5 Z" fill="#fff"/><path d="M15 17 L24 18.2 L16.5 21 Z" fill="#fff"/></svg>
<div class="t" style="left:432.50px;top:778.69px;font-size:16.3px;line-height:16.3px;color:#2b2f36;">USPS</div>
<div class="b" style="left:633px;top:780px;width:187px;height:28px;background:#fbfbfb;filter:blur(0.8px)"></div>
<div class="b" style="left:668px;top:780px;width:133px;height:28px;background:#f3f4f4;filter:blur(0.8px)"></div>
<div class="b" style="left:972px;top:774px;width:69px;height:34px;background:#f7f7f7;filter:blur(0.8px)"></div>
<div class="b" style="left:1137px;top:776px;width:281px;height:32px;background:#fbfbfb;filter:blur(0.8px)"></div>
<div class="b" style="left:1196px;top:776px;width:72px;height:32px;background:#f7f7f7;filter:blur(0.8px)"></div>
<div class="b" style="left:1268px;top:770px;width:133px;height:38px;background:#f3f4f4;filter:blur(0.8px)"></div>
<div class="b" style="left:1318px;top:762px;width:100px;height:28px;background:#f7f7f7;filter:blur(0.8px)"></div>
<div class="b" style="left:1503px;top:775px;width:37px;height:22px;background:#077b66;border-radius:11px;"></div>
<div class="b" style="left:1522px;top:778px;width:17px;height:17px;background:#fff;border-radius:8.5px;"></div>
<div class="b" style="left:1738px;top:782px;width:8.4px;height:8.4px;background:#12b52e;border-radius:4.2px;"></div>
<div class="t" style="left:1757.50px;top:778.69px;font-size:16.3px;line-height:16.3px;color:#2b2f36;letter-spacing:0.4px;">Aktiviert</div>
<div class="t" style="left:1974.50px;top:761.49px;font-size:16.3px;line-height:16.3px;color:#0d7f69;letter-spacing:0.35px;">Neu autorisieren</div>
<div class="t" style="left:1974.50px;top:795.09px;font-size:16.3px;line-height:16.3px;color:#0d7f69;letter-spacing:0.3px;">Versandkanal einstellen</div>
<div class="b" style="left:356px;top:836px;width:1812px;height:1px;background:#e8eaef;border-radius:0px;"></div>
<svg class="b" style="left:378px;top:866px;" width="43" height="41" viewBox="0 0 43 41"><circle cx="21.5" cy="20" r="21.2" fill="#002e6d"/>
<g fill="none" stroke="#ffcd00" stroke-width="2.2" stroke-linejoin="round">
<path d="M13.3 3.2 L24.5 3.2 A13.2 16.8 0 0 1 24.5 36.8 L13.3 36.8 Q15.5 33.2 17.5 32.8 L24.5 32.8 A9.2 12.8 0 0 0 24.5 7.2 L17.5 7.2 Q15.5 6.8 13.3 3.2 Z"/>
<path d="M12.5 18.4 L4.4 18.4 L4.4 12.2 L20.5 12.2 A8.6 7.6 0 0 1 20.5 27.4 L4.4 27.4 L4.4 22.2 L13.8 22.2"/>
<path d="M14.2 18.2 A6.9 6.4 0 1 0 21.1 16.2"/>
<circle cx="21.1" cy="19.8" r="2.6"/></g></svg>
<div class="t" style="left:432.50px;top:878.69px;font-size:16.3px;line-height:16.3px;color:#2b2f36;">Correos Express</div>
<div class="b" style="left:608px;top:875px;width:212px;height:28px;background:#fbfbfb;filter:blur(0.8px)"></div>
<div class="b" style="left:668px;top:875px;width:133px;height:28px;background:#f3f4f4;filter:blur(0.8px)"></div>
<div class="b" style="left:966px;top:873px;width:142px;height:33px;background:#fbfbfb;filter:blur(0.8px)"></div>
<div class="b" style="left:1000px;top:873px;width:72px;height:32px;background:#f7f7f7;filter:blur(0.8px)"></div>
<div class="b" style="left:1150px;top:874px;width:260px;height:29px;background:#fbfbfb;filter:blur(0.8px)"></div>
<div class="b" style="left:1196px;top:874px;width:72px;height:29px;background:#f7f7f7;filter:blur(0.8px)"></div>
<div class="b" style="left:1268px;top:874px;width:134px;height:29px;background:#f3f4f4;filter:blur(0.8px)"></div>
<div class="b" style="left:1503px;top:875px;width:37px;height:22px;background:#077b66;border-radius:11px;"></div>
<div class="b" style="left:1522px;top:878px;width:17px;height:17px;background:#fff;border-radius:8.5px;"></div>
<div class="b" style="left:1738px;top:882px;width:8.4px;height:8.4px;background:#12b52e;border-radius:4.2px;"></div>
<div class="t" style="left:1757.50px;top:878.69px;font-size:16.3px;line-height:16.3px;color:#2b2f36;letter-spacing:0.4px;">Aktiviert</div>
<div class="t" style="left:1974.50px;top:861.49px;font-size:16.3px;line-height:16.3px;color:#0d7f69;letter-spacing:0.35px;">Neu autorisieren</div>
<div class="t" style="left:1974.50px;top:895.09px;font-size:16.3px;line-height:16.3px;color:#0d7f69;letter-spacing:0.3px;">Versandkanal einstellen</div>
<div class="b" style="left:356px;top:935px;width:1812px;height:1px;background:#e8eaef;border-radius:0px;"></div>
<svg class="b" style="left:381px;top:966px;" width="37" height="37" viewBox="0 0 37 37"><circle cx="18.5" cy="18.5" r="18.5" fill="#dc0a17"/><rect x="13.2" y="7.5" width="10.5" height="21.5" fill="#fff"/>
<rect x="15.5" y="9.5" width="5.5" height="4.5" fill="#c9955a"/><rect x="3.2" y="15.5" width="30.5" height="8" fill="#ee3a35" stroke="#ff7a50" stroke-width="0.7"/>
<text x="18.5" y="21.6" text-anchor="middle" font-family="Liberation Sans" font-weight="700" font-size="5.5" fill="#ffd090" textLength="26" lengthAdjust="spacingAndGlyphs">Royal Mail</text></svg>
<div class="t" style="left:432.50px;top:977.69px;font-size:16.3px;line-height:16.3px;color:#2b2f36;">Royal Mail Click &amp; Drop</div>
<div class="b" style="left:638px;top:977px;width:237px;height:30px;background:#fbfbfb;filter:blur(0.8px)"></div>
<div class="b" style="left:668px;top:977px;width:133px;height:30px;background:#f3f4f4;filter:blur(0.8px)"></div>
<div class="b" style="left:945px;top:972px;width:127px;height:30px;background:#fbfbfb;filter:blur(0.8px)"></div>
<div class="b" style="left:1000px;top:972px;width:72px;height:30px;background:#f7f7f7;filter:blur(0.8px)"></div>
<div class="b" style="left:1202px;top:980px;width:214px;height:30px;background:#fbfbfb;filter:blur(0.8px)"></div>
<div class="b" style="left:1268px;top:980px;width:134px;height:30px;background:#f7f7f7;filter:blur(0.8px)"></div>
<div class="b" style="left:1503px;top:974px;width:37px;height:22px;background:#077b66;border-radius:11px;"></div>
<div class="b" style="left:1522px;top:977px;width:17px;height:17px;background:#fff;border-radius:8.5px;"></div>
<div class="b" style="left:1738px;top:981px;width:8.4px;height:8.4px;background:#12b52e;border-radius:4.2px;"></div>
<div class="t" style="left:1757.50px;top:977.69px;font-size:16.3px;line-height:16.3px;color:#2b2f36;letter-spacing:0.4px;">Aktiviert</div>
<div class="t" style="left:1974.50px;top:960.49px;font-size:16.3px;line-height:16.3px;color:#0d7f69;letter-spacing:0.35px;">Neu autorisieren</div>
<div class="t" style="left:1974.50px;top:994.09px;font-size:16.3px;line-height:16.3px;color:#0d7f69;letter-spacing:0.3px;">Versandkanal einstellen</div>
<div class="b" style="left:356px;top:1035px;width:1812px;height:1px;background:#e8eaef;border-radius:0px;"></div>
<svg class="b" style="left:381px;top:1066px;" width="37" height="37" viewBox="0 0 37 37"><circle cx="18.5" cy="18.5" r="18.5" fill="#4048e8"/><text x="18.5" y="23.5" text-anchor="middle" font-family="Liberation Sans" font-weight="700" font-size="13" fill="#25c3ee" textLength="38" lengthAdjust="spacingAndGlyphs">CIRRO</text></svg>
<div class="t" style="left:432.50px;top:1077.69px;font-size:16.3px;line-height:16.3px;color:#2b2f36;">Cirro</div>
<div class="b" style="left:627px;top:1077px;width:138px;height:30px;background:#fbfbfb;filter:blur(0.8px)"></div>
<div class="b" style="left:668px;top:1077px;width:66px;height:30px;background:#f3f4f4;filter:blur(0.8px)"></div>
<div class="b" style="left:734px;top:1077px;width:31px;height:30px;background:#f7f7f7;filter:blur(0.8px)"></div>
<div class="b" style="left:952px;top:1072px;width:115px;height:31px;background:#fbfbfb;filter:blur(0.8px)"></div>
<div class="b" style="left:1000px;top:1072px;width:67px;height:30px;background:#f7f7f7;filter:blur(0.8px)"></div>
<div class="b" style="left:1191px;top:1068px;width:211px;height:31px;background:#fbfbfb;filter:blur(0.8px)"></div>
<div class="b" style="left:1268px;top:1072px;width:134px;height:26px;background:#f3f4f4;filter:blur(0.8px)"></div>
<div class="b" style="left:1503px;top:1074px;width:37px;height:22px;background:#077b66;border-radius:11px;"></div>
<div class="b" style="left:1522px;top:1077px;width:17px;height:17px;background:#fff;border-radius:8.5px;"></div>
<div class="b" style="left:1738px;top:1081px;width:8.4px;height:8.4px;background:#12b52e;border-radius:4.2px;"></div>
<div class="t" style="left:1757.50px;top:1077.69px;font-size:16.3px;line-height:16.3px;color:#2b2f36;letter-spacing:0.4px;">Aktiviert</div>
<div class="t" style="left:1974.50px;top:1060.49px;font-size:16.3px;line-height:16.3px;color:#0d7f69;letter-spacing:0.35px;">Neu autorisieren</div>
<div class="t" style="left:1974.50px;top:1094.09px;font-size:16.3px;line-height:16.3px;color:#0d7f69;letter-spacing:0.3px;">Versandkanal einstellen</div>
<div class="b" style="left:356px;top:1135px;width:1812px;height:1px;background:#e8eaef;border-radius:0px;"></div>
<svg class="b" style="left:381px;top:1166px;" width="37" height="37" viewBox="0 0 37 37"><circle cx="18.5" cy="18.5" r="18.5" fill="#0d3344"/><text x="18.5" y="16" text-anchor="middle" font-family="Liberation Sans" font-weight="700" font-size="8" fill="#fff" textLength="27" lengthAdjust="spacingAndGlyphs">amazon</text><text x="18.5" y="24" text-anchor="middle" font-family="Liberation Sans" font-weight="700" font-size="8.5" fill="#fff" textLength="30" lengthAdjust="spacingAndGlyphs">shipping</text></svg>
<div class="t" style="left:432.50px;top:1177.69px;font-size:16.3px;line-height:16.3px;color:#2b2f36;">Amazon shipping</div>
<div class="b" style="left:627px;top:1169px;width:81px;height:22px;background:#fbfbfb;filter:blur(0.8px)"></div>
<div class="b" style="left:908px;top:1171px;width:162px;height:20px;background:#fbfbfb;filter:blur(0.8px)"></div>
<div class="b" style="left:1000px;top:1173px;width:70px;height:18px;background:#f7f7f7;filter:blur(0.8px)"></div>
<div class="b" style="left:1222px;top:1164px;width:196px;height:27px;background:#fbfbfb;filter:blur(0.8px)"></div>
<div class="b" style="left:1268px;top:1164px;width:132px;height:27px;background:#f7f7f7;filter:blur(0.8px)"></div>
<div class="b" style="left:1503px;top:1174px;width:37px;height:22px;background:#077b66;border-radius:11px;"></div>
<div class="b" style="left:1522px;top:1177px;width:17px;height:17px;background:#fff;border-radius:8.5px;"></div>
<div class="b" style="left:1738px;top:1181px;width:8.4px;height:8.4px;background:#12b52e;border-radius:4.2px;"></div>
<div class="t" style="left:1757.50px;top:1177.69px;font-size:16.3px;line-height:16.3px;color:#2b2f36;letter-spacing:0.4px;">Aktiviert</div>
<div class="t" style="left:1974.50px;top:1160.49px;font-size:16.3px;line-height:16.3px;color:#0d7f69;letter-spacing:0.35px;">Neu autorisieren</div>
<div class="t" style="left:1974.50px;top:1194.09px;font-size:16.3px;line-height:16.3px;color:#0d7f69;letter-spacing:0.3px;">Versandkanal einstellen</div>
<div class="b" style="left:2160px;top:882.0px;width:65px;height:65px;border-radius:50%;background:#fff;box-shadow:0 2px 10px rgba(0,0,0,0.08)"></div>
<div class="b" style="left:2160px;top:963.0px;width:65px;height:65px;border-radius:50%;background:#fff;box-shadow:0 2px 10px rgba(0,0,0,0.08)"></div>
<svg class="b" style="left:2170px;top:895px;" width="44" height="40" viewBox="0 0 44 40"><g fill="#22a90c"><path d="M10.9 19.5 Q10.9 9 22.8 9 Q34.7 9 34.7 19.5" fill="none" stroke="#22a90c" stroke-width="1.8"/>
<rect x="7.8" y="15.7" width="5.7" height="9.3" rx="2.8"/><rect x="32.1" y="15.7" width="5.7" height="9.3" rx="2.8"/>
<ellipse cx="22.8" cy="19.8" rx="7.8" ry="5.9"/><path d="M16.6 22 L16.3 28 L21.8 24.6 Z"/>
<path d="M34.3 24.5 Q33.8 31 25 31.8" fill="none" stroke="#22a90c" stroke-width="1.7"/><rect x="21.2" y="30.2" width="5" height="3.2" rx="1.6"/></g></svg>
<svg class="b" style="left:2176px;top:980px;" width="32" height="32" viewBox="0 0 32 32"><g fill="#0050ff"><rect x="4.5" y="4.5" width="23.5" height="16.5" rx="2"/><rect x="13.5" y="21" width="5" height="3"/><rect x="8" y="23.5" width="16" height="2" rx="1"/></g>
<path d="M14 9 L14 16.5 L19.5 12.8 Z" fill="#fff"/></svg>
</body></html>
